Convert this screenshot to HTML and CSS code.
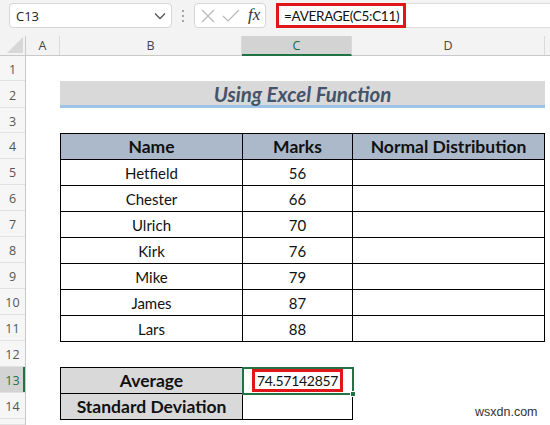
FILE: index.html
```html
<!DOCTYPE html>
<html>
<head>
<meta charset="utf-8">
<link rel="stylesheet" href="styles.css">
</head>
<body>
<div class="app">
  <div class="topbar">
    <div class="namebox">
      <span class="ref">C13</span>
      <svg class="chev" width="12" height="8" viewBox="0 0 12 8"><polyline points="1,1.5 6,6.5 11,1.5" fill="none" stroke="#555" stroke-width="1.3"/></svg>
    </div>
    <div class="dots"><i></i><i></i><i></i></div>
    <div class="fxbox">
      <svg width="16" height="16" viewBox="0 0 16 16"><path d="M2 2 L14 14 M14 2 L2 14" stroke="#b8b8b8" stroke-width="1.2" fill="none"/></svg>
      <svg width="18" height="16" viewBox="0 0 18 16"><polyline points="1,8 6,13 17,2" stroke="#b8b8b8" stroke-width="1.2" fill="none"/></svg>
      <span class="fx">fx</span>
    </div>
    <div class="formula">
      <span class="formula-text">=AVERAGE(C5:C11)</span>
    </div>
  </div>

  <div class="colheads">
    <div class="corner"><svg width="16" height="16" viewBox="0 0 16 16"><polygon points="16,0 16,16 0,16" fill="#d8d8d8"/></svg></div>
    <div class="ch">A</div>
    <div class="ch">B</div>
    <div class="ch sel">C</div>
    <div class="ch">D</div>
    <div class="ch last"></div>
  </div>

  <div class="body">
    <div class="rowheads">
      <div class="rh">1</div>
      <div class="rh">2</div>
      <div class="rh">3</div>
      <div class="rh">4</div>
      <div class="rh">5</div>
      <div class="rh">6</div>
      <div class="rh">7</div>
      <div class="rh">8</div>
      <div class="rh">9</div>
      <div class="rh">10</div>
      <div class="rh">11</div>
      <div class="rh">12</div>
      <div class="rh sel">13</div>
      <div class="rh">14</div>
      <div class="rh"></div>
    </div>
    <div class="cells">
      <div class="title">Using Excel Function</div>
      <table class="data">
        <tr class="head"><th class="cb">Name</th><th class="cc">Marks</th><th class="cd">Normal Distribution</th></tr>
        <tr><td>Hetfield</td><td>56</td><td></td></tr>
        <tr><td>Chester</td><td>66</td><td></td></tr>
        <tr><td>Ulrich</td><td>70</td><td></td></tr>
        <tr><td>Kirk</td><td>76</td><td></td></tr>
        <tr><td>Mike</td><td>79</td><td></td></tr>
        <tr><td>James</td><td>87</td><td></td></tr>
        <tr><td>Lars</td><td>88</td><td></td></tr>
      </table>
      <table class="summary">
        <tr><th class="cb">Average</th><td class="active"><span class="hl">74.57142857</span><div class="selbox"><i class="handle"></i></div></td></tr>
        <tr><th class="cb">Standard Deviation</th><td></td></tr>
      </table>
    </div>
  </div>
  <div class="watermark">wsxdn.com</div>
</div>
</body>
</html>
```

FILE: styles.css
```css
* { box-sizing: border-box; }
html, body { margin: 0; padding: 0; }
body { background: #fff; font-family: Lato, "Open Sans", sans-serif; }
.app { position: relative; width: 550px; height: 425px; overflow: hidden; }

.topbar {
  height: 36px;
  background: #f3f3f3;
  display: flex;
  align-items: flex-start;
  padding: 3px 0 0 9px;
}
.namebox {
  width: 163px; height: 25px;
  background: #fff;
  border: 1px solid #d6d6d6;
  border-radius: 4px;
  display: flex; align-items: center; justify-content: space-between;
  padding: 0 5px 0 6px;
  font-family: "Open Sans", sans-serif; font-size: 13px; color: #222;
}
.chev { margin-top: 1px; }
.dots {
  width: 22px; height: 25px;
  display: flex; flex-direction: column; align-items: center; justify-content: center; gap: 3px;
}
.dots i { display: block; width: 2px; height: 2px; background: #8a8a8a; border-radius: 1px; }
.fxbox {
  width: 72px; height: 25px;
  background: #fff;
  border: 1px solid #d6d6d6;
  border-radius: 4px;
  display: flex; align-items: center;
  padding: 0 0 0 5px; gap: 6px;
}
.fx { font-family: "Liberation Serif", serif; font-style: italic; font-size: 17px; color: #333; margin-left: 2px; margin-top: -2px; }
.formula {
  flex: 1; height: 25px; margin-left: 10px;
  background: #fff;
  border-top: 1px solid #dcdcdc;
  border-bottom: 1px solid #dcdcdc;
  display: flex; align-items: stretch;
}
.formula-text {
  border: 3px solid #e0161b;
  margin-top: -1px; margin-bottom: -1px;
  display: flex; align-items: center;
  padding: 0 4px 0 5px;
  font-family: Lato, sans-serif; font-size: 13.5px; letter-spacing: -0.3px; color: #111;
}

.colheads {
  height: 20px;
  display: grid;
  grid-template-columns: 26px 34px 182px 110px 193px 5px;
  background: #f3f3f3;
  border-bottom: 1px solid #c9c9c9;
}
.corner { border-right: 1px solid #c9c9c9; display: flex; align-items: flex-end; justify-content: flex-end; padding: 0 2px 2px 0; }
.ch {
  border-right: 1px solid #dadada;
  display: flex; align-items: center; justify-content: center;
  font-family: "Open Sans", sans-serif; font-size: 12.5px; color: #444;
}
.ch.sel { background: #d3d3d3; color: #1d6b40; border-bottom: 2px solid #217346; margin-bottom: -1px; }
.ch.last { border-right: none; }

.body { display: flex; }
.rowheads {
  width: 26px;
  display: grid;
  grid-template-rows: 25px 27px 25px repeat(11, 26px) 6px;
  background: #f6f6f6;
  border-right: 1px solid #c9c9c9;
}
.rh {
  border-bottom: 1px solid #e2e2e2;
  display: flex; align-items: center; justify-content: center;
  font-family: "Open Sans", sans-serif; font-size: 12.5px; color: #555;
  padding-top: 2px;
}
.rh.sel { background: #d3d3d3; color: #217346; box-shadow: inset -2px 0 0 #217346; }

.cells {
  flex: 1;
  display: grid;
  grid-template-columns: 34px 182px 110px 193px 5px;
  grid-template-rows: 25px 27px 25px repeat(11, 26px) 6px;
}
.title {
  grid-row: 2; grid-column: 2 / 5;
  background: #d9d9d9;
  border-bottom: 3px solid #9dc3e6;
  display: flex; align-items: center; justify-content: center;
  font-weight: 700; font-style: italic; font-size: 20.5px; color: #44546a;
  padding-top: 1px;
}

table { border-collapse: collapse; table-layout: fixed; }
.data { grid-row: 4 / 12; grid-column: 2 / 5; width: 100%; height: 208px; }
.data th, .data td, .summary th, .summary td {
  border: 1px solid #000;
  height: 26px; padding: 0;
  text-align: center;
  font-size: 15px; color: #111;
  font-weight: 400;
}
.data .head th { background: #acb9ca; font-weight: 700; font-size: 17.5px; }
.data .cb, .summary .cb { width: 182px; }
.data .cc { width: 110px; }

.summary { grid-row: 13 / 15; grid-column: 2 / 4; width: 100%; height: 52px; }
.summary th { background: #d9d9d9; font-weight: 700 !important; font-size: 17.5px !important; }
.summary td { width: 110px; position: relative; }
.hl {
  display: inline-block;
  border: 3px solid #e0161b;
  padding: 1px 2px 0;
  line-height: 16px;
  font-size: 14px;
  letter-spacing: -0.3px;
}
.selbox {
  position: absolute; left: -1px; top: -1px; right: -2px; bottom: -2px;
  border: 2px solid #217346;
}
.handle {
  position: absolute; right: -4px; bottom: -4px;
  width: 6px; height: 6px; background: #217346; border: 1px solid #fff;
}

.watermark {
  position: absolute; left: 475px; top: 405px;
  font-family: "Liberation Sans", sans-serif; font-size: 12.5px; color: #333;
}
```
